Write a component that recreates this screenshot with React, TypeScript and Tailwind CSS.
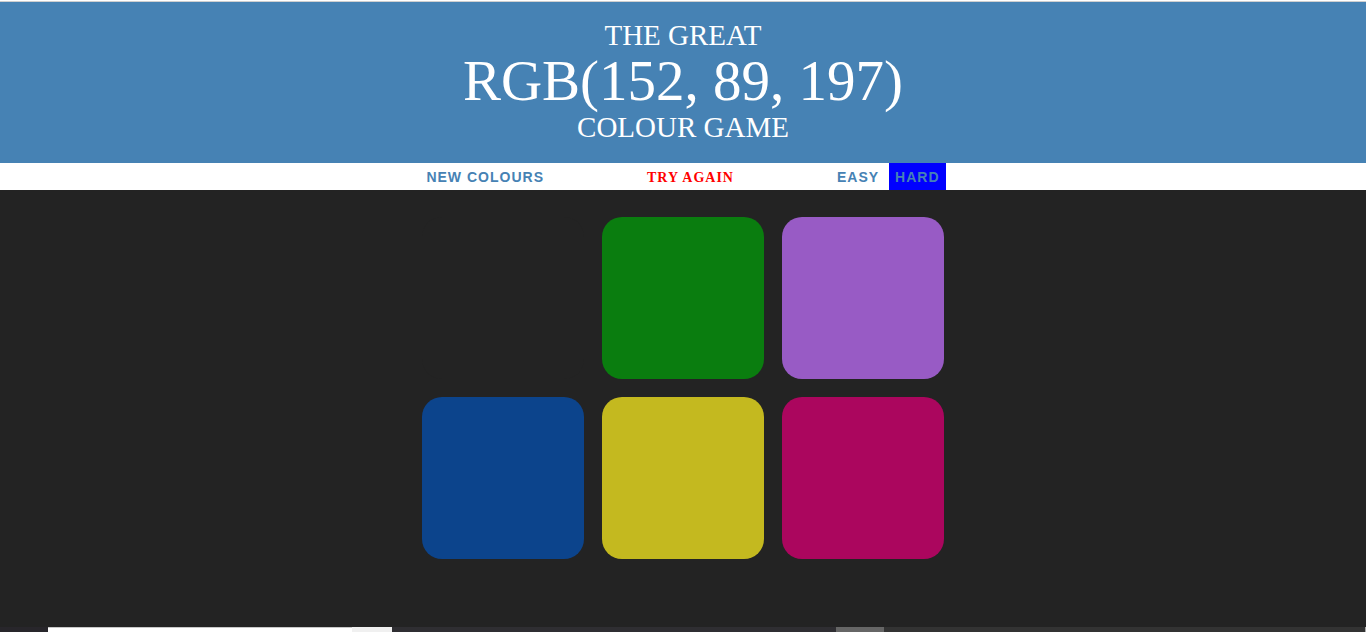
const squares = [
  { color: "#232323" },
  { color: "#0a7d0f" },
  { color: "#985bc5" },
  { color: "#0c448c" },
  { color: "#c4b91f" },
  { color: "#ab065e" },
];

export default function App() {
  return (
    <div className="h-[632px] overflow-hidden flex flex-col bg-[#232323]">
      <div className="h-[1px] bg-white" />
      <div className="h-[1px] bg-[#cfcfcf]" />
      <header className="bg-[#4682b4] text-white text-center pt-[18px] pb-[21px] font-['Liberation_Serif',serif] uppercase">
        <div className="text-[29px] leading-[30px]">The Great</div>
        <div className="text-[57px] leading-[62px]">RGB(152, 89, 197)</div>
        <div className="text-[29px] leading-[30px]">Colour Game</div>
      </header>
      <nav className="h-[27px] bg-white flex justify-center gap-[4px] font-['Liberation_Sans',Arial,sans-serif]">
        <button className="h-full pt-[1px] px-[6px] text-[14px] font-bold tracking-[1px] uppercase text-[#4682b4]">
          New Colours
        </button>
        <span className="w-[273px] pt-[1px] flex items-center justify-center text-[14px] uppercase text-[#ff0000] font-['Liberation_Serif',serif] font-bold tracking-[1px]">
          Try Again
        </span>
        <button className="h-full pt-[1px] px-[6px] text-[14px] font-bold tracking-[1px] uppercase text-[#4682b4]">
          Easy
        </button>
        <button className="h-full pt-[1px] px-[6px] text-[14px] font-bold tracking-[1px] uppercase text-[#4682b4] bg-[#0000ff]">
          Hard
        </button>
      </nav>
      <main className="flex-1">
        <div className="w-[540px] mx-auto mt-[18px] grid grid-cols-3 gap-[18px] px-[9px] py-[9px]">
          {squares.map((s, i) => (
            <div key={i} className="h-[162px] rounded-[20px]" style={{ backgroundColor: s.color }} />
          ))}
        </div>
      </main>
      <div className="h-[5px] flex">
        <div className="w-[48px] bg-[#28262b]" />
        <div className="w-[304px] bg-white border-t border-[#c8c8c8]" />
        <div className="w-[40px] bg-[#f0f0f0]" />
        <div className="w-[444px] bg-[#2f2e32]" />
        <div className="w-[48px] bg-[#666666]" />
        <div className="flex-1 bg-[#333333] border-r border-[#aaaaaa]" />
      </div>
    </div>
  );
}
